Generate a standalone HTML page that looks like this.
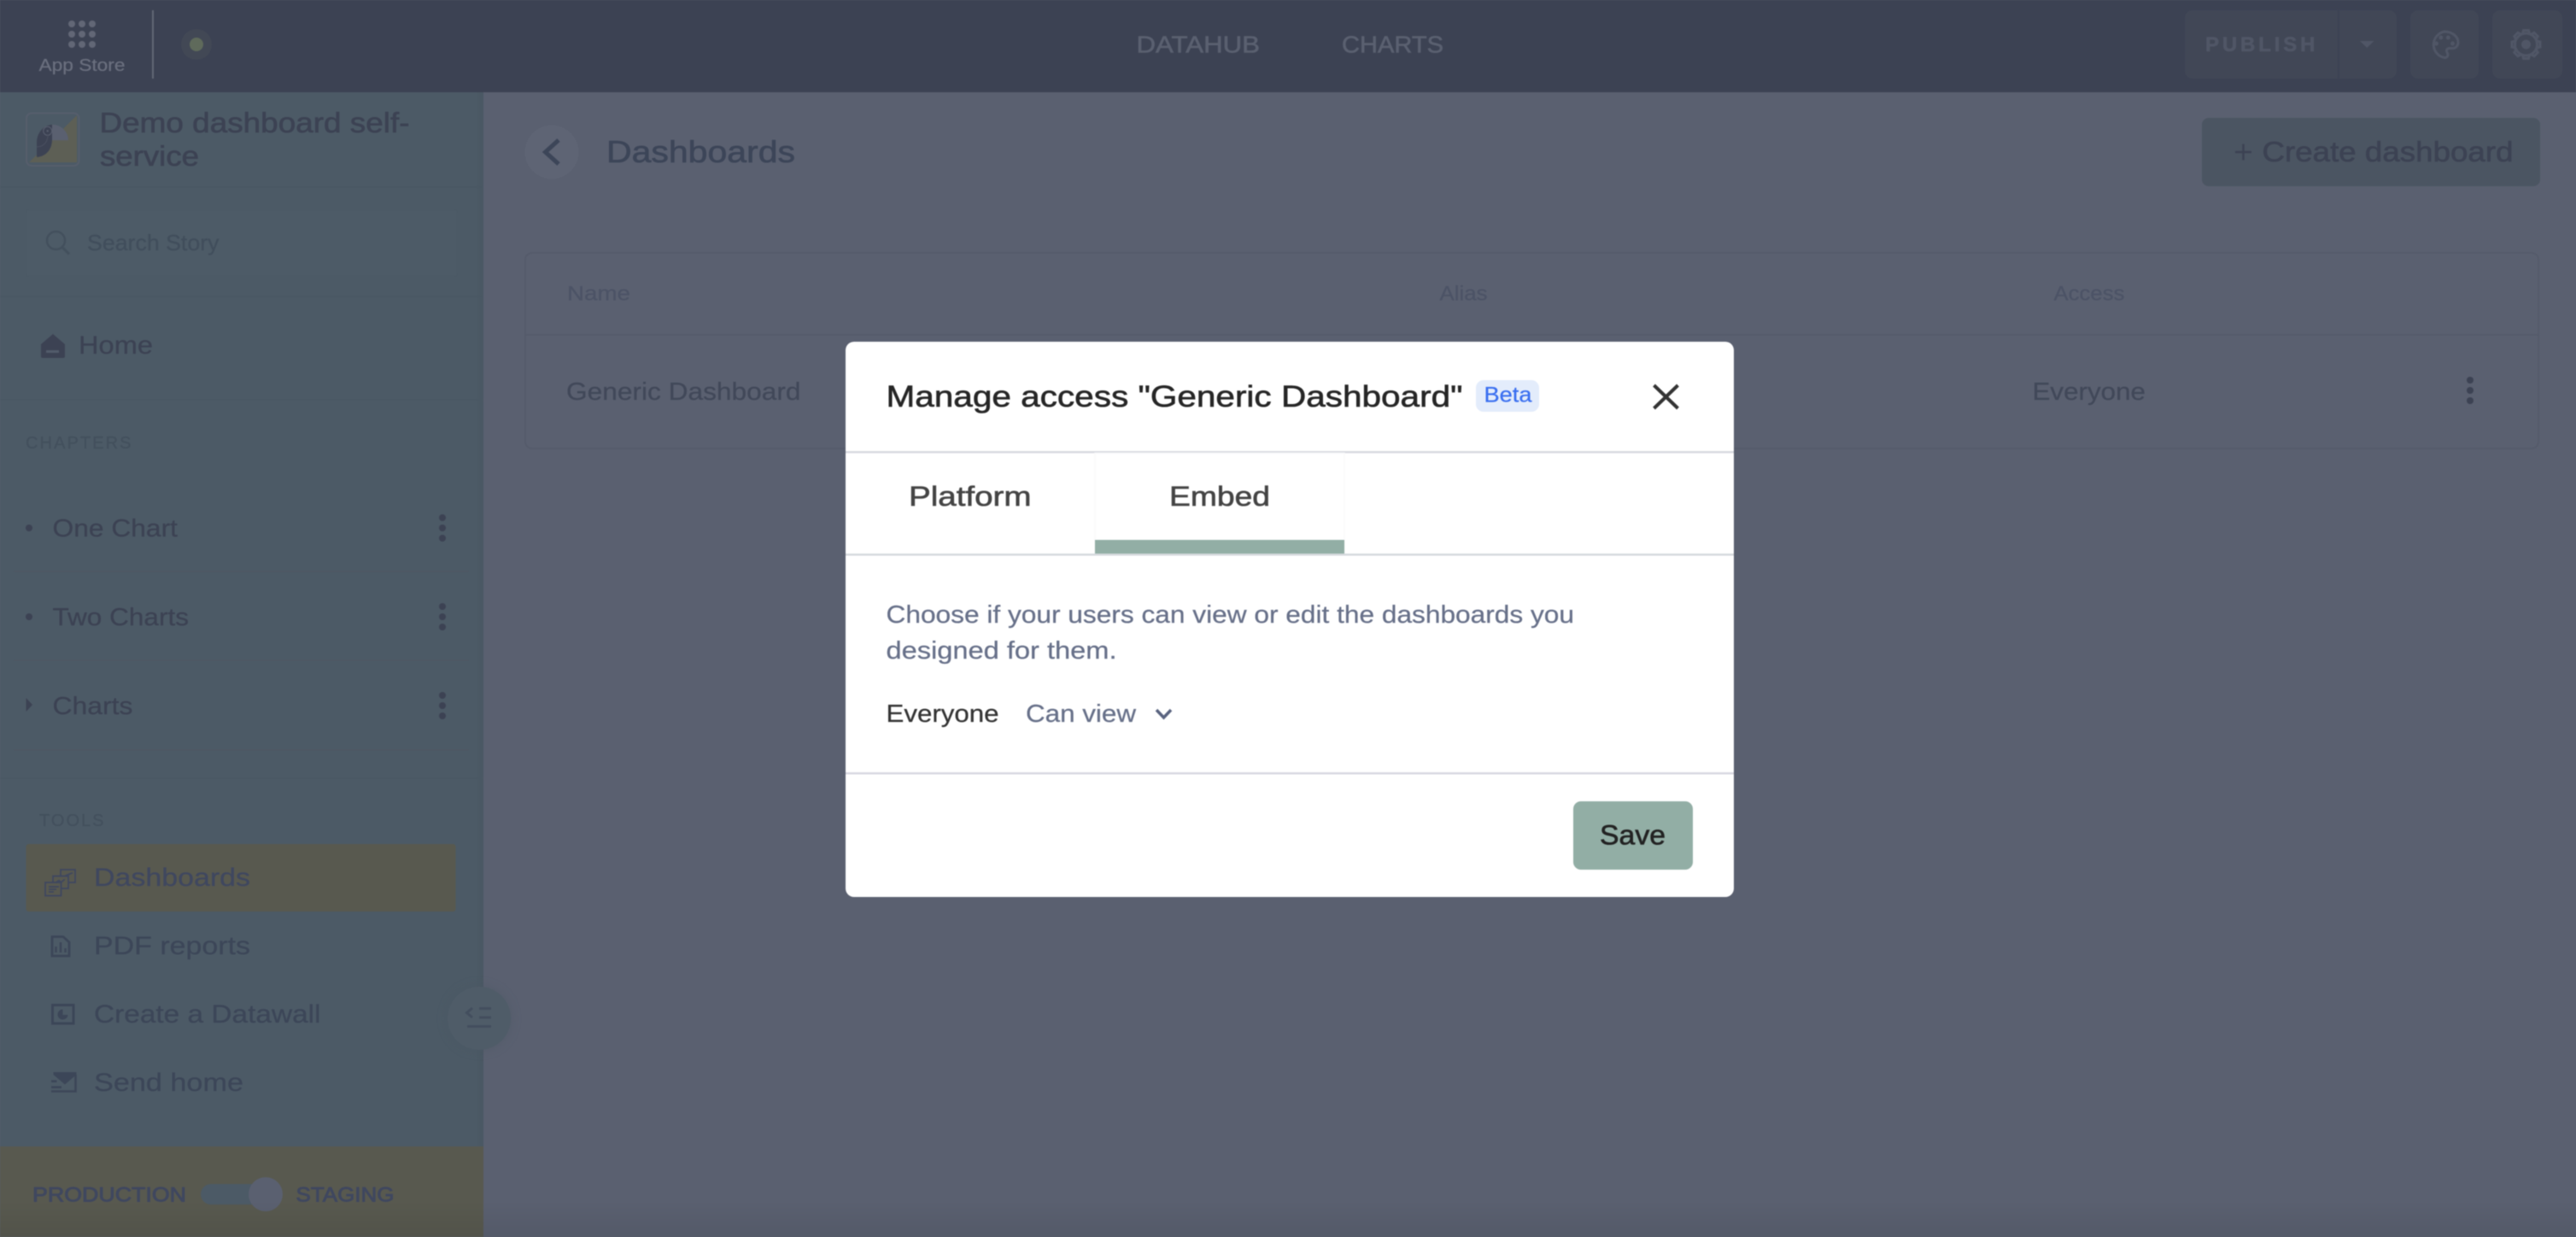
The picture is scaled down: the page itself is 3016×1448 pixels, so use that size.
<!DOCTYPE html>
<html lang="en">
<head>
<meta charset="utf-8">
<title>Dashboards</title>
<style>
html,body{margin:0;padding:0;width:3016px;height:1448px;overflow:hidden;background:#5a6070}
svg{display:block;filter:blur(.5px)}
text{font-family:"Liberation Sans",sans-serif;fill:currentColor;stroke:currentColor;stroke-width:.25px;white-space:pre}
.m{stroke-width:.6px}
.s{stroke-width:.9px}
</style>
</head>
<body>
<svg xmlns="http://www.w3.org/2000/svg" width="3016" height="1448" viewBox="0 0 3016 1448">
<defs>
<linearGradient id="edge" x1="0" x2="1" y1="0" y2="0"><stop offset="0" stop-color="#000" stop-opacity="0"/><stop offset="1" stop-color="#000" stop-opacity=".035"/></linearGradient>
<linearGradient id="bot" x1="0" x2="0" y1="0" y2="1"><stop offset="0" stop-color="#000" stop-opacity="0"/><stop offset="1" stop-color="#000" stop-opacity=".07"/></linearGradient>
<filter id="soft" x="-30%" y="-30%" width="160%" height="160%"><feGaussianBlur stdDeviation="6"/></filter>
</defs>

<!-- page -->
<rect width="3016" height="1448" fill="#5a6070"/>

<!-- sidebar -->
<rect x="0" y="108" width="566" height="1340" fill="#4c5a66"/>
<rect x="556" y="108" width="10" height="1340" fill="url(#edge)"/>
<rect x="0" y="218" width="566" height="2" fill="#495763"/>
<rect x="0" y="346" width="566" height="2" fill="#495763"/>
<rect x="0" y="467" width="566" height="2" fill="#4a5864"/>
<rect x="0" y="910" width="566" height="2" fill="#4a5864"/>

<!-- logo -->
<rect x="31" y="132.500" width="61.500" height="61.500" rx="6" fill="#4c5a66" stroke="#565e6c" stroke-width="2"/>
<path d="M90 135V190H34Z" fill="#5d5f55"/>
<path d="M61 145.700a19 18.600 0 0 1 19 18.600H61Z" fill="#5a6070"/>
<path d="M61 145.700C50 147 43 156 43 167V184C54 183 61 175 61 163Z" fill="#3c4253"/>
<circle cx="55.700" cy="153.300" r="5" fill="none" stroke="#5a6070" stroke-width="1"/>
<circle cx="55.700" cy="153.300" r="1.200" fill="#5a6070"/>
<path d="M43 172C50 172 56 167 56 158" fill="none" stroke="#4a5060" stroke-width="1"/>

<text x="116.500" y="155" font-size="33" textLength="363" lengthAdjust="spacingAndGlyphs" color="#3c4253" class="m">Demo dashboard self-</text>
<text x="117" y="194" font-size="33" textLength="116" lengthAdjust="spacingAndGlyphs" color="#3c4253" class="m">service</text>

<!-- search -->
<rect x="30.500" y="245.500" width="505" height="78" rx="3" fill="#4d5b67" stroke="#4b5965"/>
<circle cx="65.500" cy="281.500" r="10.500" fill="none" stroke="#43505d" stroke-width="2.500"/>
<path d="M73 289.500L81 297.500" stroke="#43505d" stroke-width="3" fill="none"/>
<text x="102" y="293" font-size="26" textLength="154.500" lengthAdjust="spacingAndGlyphs" color="#414e5c">Search Story</text>

<!-- home -->
<path d="M62 391L76 403V417a2 2 0 0 1-2 2H50a2 2 0 0 1-2-2V403Z" fill="#3c4253"/>
<rect x="54" y="410" width="15" height="3" fill="#525c6b"/>
<text x="92" y="414" font-size="30" textLength="87" lengthAdjust="spacingAndGlyphs" color="#3c4253">Home</text>

<!-- chapters -->
<text x="30" y="525" font-size="20" textLength="123.500" lengthAdjust="spacing" color="#43505d">CHAPTERS</text>

<circle cx="34" cy="618" r="4" fill="#3c4253"/>
<text x="61.500" y="628" font-size="29" textLength="146.500" lengthAdjust="spacingAndGlyphs" color="#3c4253">One Chart</text>
<g fill="#3c4253"><circle cx="518" cy="606" r="4"/><circle cx="518" cy="618" r="4"/><circle cx="518" cy="630" r="4"/></g>
<rect x="16" y="668" width="533" height="1.500" fill="#4e5763"/>

<circle cx="34" cy="722" r="4" fill="#3c4253"/>
<text x="61.500" y="732" font-size="29" textLength="159.500" lengthAdjust="spacingAndGlyphs" color="#3c4253">Two Charts</text>
<g fill="#3c4253"><circle cx="518" cy="710" r="4"/><circle cx="518" cy="722" r="4"/><circle cx="518" cy="734" r="4"/></g>
<rect x="16" y="772" width="533" height="1.500" fill="#4e5763"/>

<path d="M30.500 817L38 825L30.500 833Z" fill="#3c4253"/>
<text x="61.500" y="836" font-size="29" textLength="94" lengthAdjust="spacingAndGlyphs" color="#3c4253">Charts</text>
<g fill="#3c4253"><circle cx="518" cy="814" r="4"/><circle cx="518" cy="826" r="4"/><circle cx="518" cy="838" r="4"/></g>
<rect x="16" y="877" width="533" height="1.500" fill="#4e5763"/>

<!-- tools -->
<text x="46" y="967" font-size="20" textLength="75.500" lengthAdjust="spacing" color="#43505d">TOOLS</text>
<rect x="30.500" y="988" width="503" height="79" rx="3" fill="#58594f"/>

<g fill="none" stroke="#3f475f" stroke-width="1.800">
<rect x="71" y="1018" width="17" height="15"/>
<rect x="62" y="1025.500" width="18" height="14.500" fill="#58594f"/>
<rect x="53" y="1033" width="18.500" height="15.500" fill="#58594f"/>
<path d="M57 1038h12M57 1041h9M57 1044h6M65 1033.300l4-2.600 2.700 2 4-3.400M76.700 1025l8.300-3.300"/>
</g>
<text x="110" y="1037" font-size="30" textLength="183" lengthAdjust="spacingAndGlyphs" color="#3f475f">Dashboards</text>

<path d="M61 1096.500H74L81 1103V1119H61Z" fill="none" stroke="#3c4658" stroke-width="2.800"/>
<path d="M65.500 1108v7M71 1103v12M76.500 1110v5" stroke="#3c4658" stroke-width="2.500" fill="none"/>
<text x="110" y="1117" font-size="30" textLength="183" lengthAdjust="spacingAndGlyphs" color="#3c4658">PDF reports</text>

<rect x="61.500" y="1176.500" width="24.500" height="21.500" fill="none" stroke="#3c4658" stroke-width="3"/>
<path d="M73.500 1181.500a6 6 0 1 0 6 6.500h-6Z" fill="#3c4658"/>
<text x="110" y="1197" font-size="30" textLength="265.500" lengthAdjust="spacingAndGlyphs" color="#3c4658">Create a Datawall</text>

<path d="M62.500 1255H89.500V1258L76 1269.500L62.500 1258Z" fill="#3c4658"/>
<path d="M88.500 1258V1277.500H60M60 1265.700h6.500M60 1272.700h12" stroke="#3c4658" stroke-width="2.600" fill="none"/>
<text x="110" y="1277" font-size="30" textLength="175" lengthAdjust="spacingAndGlyphs" color="#3c4658">Send home</text>

<!-- env bar -->
<rect x="0" y="1342" width="566" height="106" fill="#58594f"/>
<text x="38" y="1406.500" font-size="24" textLength="180" lengthAdjust="spacingAndGlyphs" color="#3f475f" class="s">PRODUCTION</text>
<rect x="235" y="1386" width="76" height="24" rx="12" fill="#4c5a66"/>
<circle cx="311" cy="1398" r="20" fill="#5a6070"/>
<text x="346.500" y="1406.500" font-size="24" textLength="115" lengthAdjust="spacingAndGlyphs" color="#3f475f" class="s">STAGING</text>

<!-- collapse button -->
<circle cx="561" cy="1192" r="37" fill="#4a5662" opacity=".5" filter="url(#soft)"/>
<circle cx="561" cy="1192" r="37" fill="#4f5c68"/>
<path d="M553 1180L546.500 1185.500L553 1191" fill="none" stroke="#434e5e" stroke-width="3"/>
<path d="M561 1180.500H575M561 1191H575M547 1201.500H575" fill="none" stroke="#434e5e" stroke-width="3"/>

<!-- top bar -->
<rect x="0" y="0" width="3016" height="108" fill="#3c4253"/>
<g fill="#626776">
<circle cx="84" cy="28" r="4"/><circle cx="96" cy="28" r="4"/><circle cx="108" cy="28" r="4"/>
<circle cx="84" cy="40" r="4"/><circle cx="96" cy="40" r="4"/><circle cx="108" cy="40" r="4"/>
<circle cx="84" cy="52" r="4"/><circle cx="96" cy="52" r="4"/><circle cx="108" cy="52" r="4"/>
</g>
<text x="45.500" y="83" font-size="20" textLength="101" lengthAdjust="spacingAndGlyphs" color="#6a6f7e">App Store</text>
<rect x="178" y="12" width="2" height="80" fill="#626776"/>
<circle cx="230" cy="52" r="18" fill="#424855"/>
<circle cx="230" cy="52" r="8" fill="#5f6a5b"/>

<text x="1330.500" y="61.500" font-size="28" textLength="144.500" lengthAdjust="spacingAndGlyphs" color="#5a6070" class="m">DATAHUB</text>
<text x="1571" y="61.500" font-size="28" textLength="119" lengthAdjust="spacingAndGlyphs" color="#5a6070" class="m">CHARTS</text>

<rect x="2558" y="12" width="248" height="80" rx="9" fill="#414756"/>
<rect x="2737" y="12" width="2" height="80" fill="#3c4253"/>
<text x="2582" y="60" font-size="24" textLength="128.500" lengthAdjust="spacing" color="#505666" font-weight="700" class="m">PUBLISH</text>
<path d="M2763 48H2779.500L2771.250 56Z" fill="#505666"/>
<rect x="2822" y="12" width="80" height="80" rx="9" fill="#414756"/>
<path d="M2862 37a15.500 15.500 0 0 0 0 30.500c3 0 4-2 4-3.500c0-2-1.500-2.500-1.500-4.500c0-2 1.500-3 3.500-3h3.500c4 0 6.500-3 6.500-7c0-7-7.500-12.500-16-12.500Z" fill="none" stroke="#505666" stroke-width="3"/>
<g fill="#505666"><circle cx="2852.500" cy="51" r="2.500"/><circle cx="2857.800" cy="44" r="2.500"/><circle cx="2866.300" cy="44" r="2.500"/><circle cx="2871.500" cy="51" r="2.500"/></g>
<rect x="2918" y="12" width="82" height="80" rx="9" fill="#414756"/>
<g transform="translate(2957.500 52)" fill="none" stroke="#505666" stroke-width="3">
<circle r="13"/>
<path d="M-4 -13L-3 -16.500H3L4 -13"/>
<path transform="rotate(45)" d="M-4 -13L-3 -16.500H3L4 -13"/>
<path transform="rotate(90)" d="M-4 -13L-3 -16.500H3L4 -13"/>
<path transform="rotate(135)" d="M-4 -13L-3 -16.500H3L4 -13"/>
<path transform="rotate(180)" d="M-4 -13L-3 -16.500H3L4 -13"/>
<path transform="rotate(225)" d="M-4 -13L-3 -16.500H3L4 -13"/>
<path transform="rotate(270)" d="M-4 -13L-3 -16.500H3L4 -13"/>
<path transform="rotate(315)" d="M-4 -13L-3 -16.500H3L4 -13"/>
<circle r="5.500" fill="#505666" stroke="none"/>
</g>

<!-- main header -->
<circle cx="646" cy="178" r="31.500" fill="#5e6474"/>
<path d="M654 164L638.500 178L654 192" fill="none" stroke="#3c4558" stroke-width="5"/>
<text x="710" y="190" font-size="36" textLength="221" lengthAdjust="spacingAndGlyphs" color="#3c4558" class="m">Dashboards</text>

<rect x="2578" y="138" width="396" height="80" rx="8" fill="#4b5562"/>
<path d="M2617 178H2636M2626.500 168.500V187.500" stroke="#3c4253" stroke-width="2.500" fill="none"/>
<text x="2648.500" y="189" font-size="33" textLength="294" lengthAdjust="spacingAndGlyphs" color="#3c4253" class="m">Create dashboard</text>

<!-- table -->
<rect x="615" y="296" width="2357" height="229" rx="8" fill="none" stroke="#555b6b" stroke-width="2"/>
<rect x="615" y="391" width="2357" height="2" fill="#555b6b"/>
<text x="664" y="351.500" font-size="24" textLength="74" lengthAdjust="spacingAndGlyphs" color="#4c5366">Name</text>
<text x="1685.500" y="351.500" font-size="24" textLength="56" lengthAdjust="spacingAndGlyphs" color="#4c5366">Alias</text>
<text x="2404.500" y="351.500" font-size="24" textLength="83" lengthAdjust="spacingAndGlyphs" color="#4c5366">Access</text>
<text x="663" y="468" font-size="29" textLength="274.500" lengthAdjust="spacingAndGlyphs" color="#414859">Generic Dashboard</text>
<text x="2379.500" y="468" font-size="29" textLength="132.500" lengthAdjust="spacingAndGlyphs" color="#414859">Everyone</text>
<g fill="#3c4253"><circle cx="2892" cy="445" r="4"/><circle cx="2892" cy="457" r="4"/><circle cx="2892" cy="469" r="4"/></g>

<!-- bottom shade -->
<rect x="0" y="1405" width="3016" height="43" fill="url(#bot)"/>

<!-- modal -->
<rect x="990" y="400" width="1040" height="650" rx="10" fill="#fff"/>
<text x="1037.500" y="476" font-size="35" textLength="675" lengthAdjust="spacingAndGlyphs" color="#262626" class="m">Manage access "Generic Dashboard"</text>
<rect x="1728" y="445" width="74" height="37" rx="9" fill="#e3ecfb"/>
<text x="1737.500" y="470.500" font-size="25" textLength="56" lengthAdjust="spacingAndGlyphs" color="#3a6ff0">Beta</text>
<path d="M1936.500 451L1964.500 478M1964.500 451L1936.500 478" stroke="#333" stroke-width="4" fill="none"/>

<rect x="990" y="528" width="1040" height="2.500" fill="#d8dae0"/>
<rect x="1282" y="530.500" width="292" height="117.500" fill="#fff" stroke="#fafafb" stroke-width="1.500"/>
<text x="1064" y="592" font-size="32" textLength="143.500" lengthAdjust="spacingAndGlyphs" color="#444" class="m">Platform</text>
<text x="1369" y="592" font-size="32" textLength="118" lengthAdjust="spacingAndGlyphs" color="#444" class="m">Embed</text>
<rect x="1282" y="632" width="292" height="16" fill="#92aea5"/>
<rect x="990" y="648" width="1040" height="2.500" fill="#d6dade"/>

<text x="1037.500" y="729" font-size="29" textLength="805.500" lengthAdjust="spacingAndGlyphs" color="#677089">Choose if your users can view or edit the dashboards you</text>
<text x="1037.500" y="771" font-size="29" textLength="270" lengthAdjust="spacingAndGlyphs" color="#677089">designed for them.</text>
<text x="1037.500" y="845" font-size="29" textLength="132" lengthAdjust="spacingAndGlyphs" color="#333">Everyone</text>
<text x="1201" y="845" font-size="29" textLength="129" lengthAdjust="spacingAndGlyphs" color="#677089">Can view</text>
<path d="M1354 831L1362.500 840L1371 831" fill="none" stroke="#5a6480" stroke-width="3.500"/>

<rect x="990" y="904" width="1040" height="2.500" fill="#d9d9e2"/>
<rect x="1842" y="938" width="140" height="80" rx="9" fill="#92aea5"/>
<text x="1873" y="988.500" font-size="32" textLength="77" lengthAdjust="spacingAndGlyphs" color="#222" class="m">Save</text>
</svg>
</body>
</html>
